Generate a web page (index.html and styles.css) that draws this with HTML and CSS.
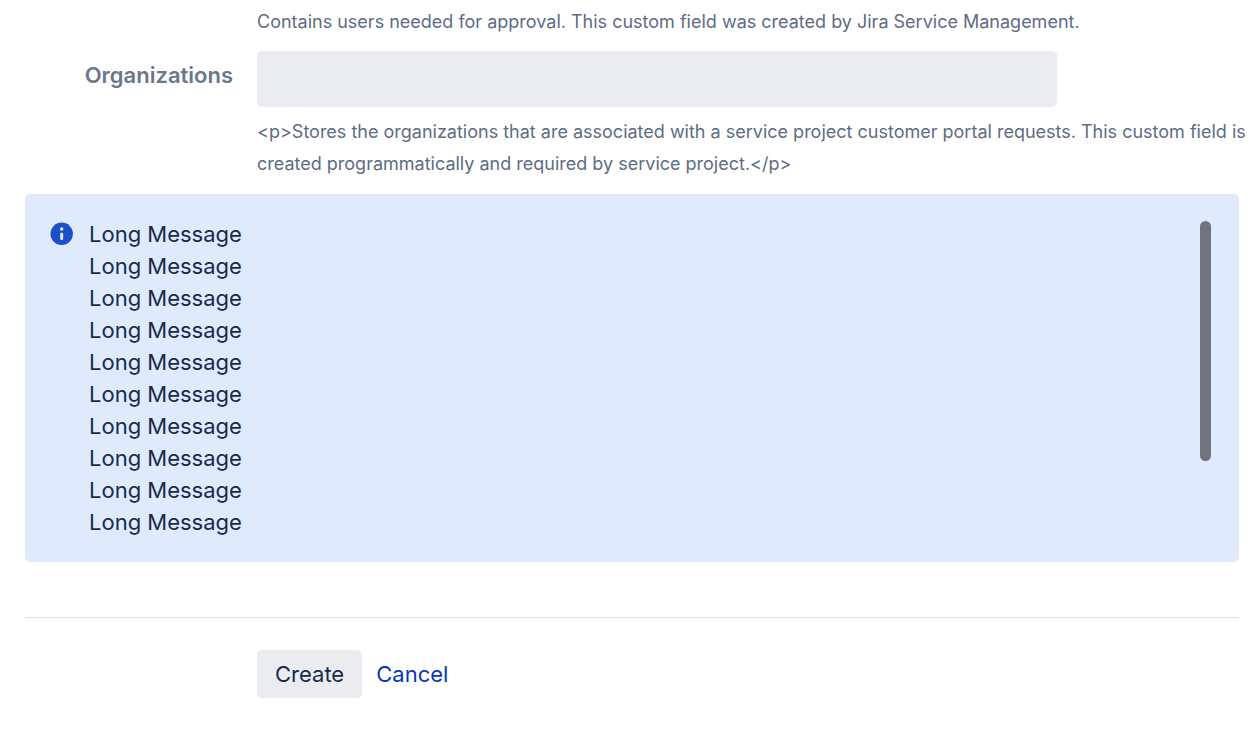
FILE: index.html
```html
<!DOCTYPE html>
<html lang="en">
<head>
<meta charset="utf-8">
<title>Create issue</title>
<link rel="stylesheet" href="styles.css">
</head>
<body>
<form class="form">
  <div class="field approvers">
    <p class="description">Contains users needed for approval. This custom field was created by Jira Service Management.</p>
  </div>
  <div class="field">
    <label class="label" for="organizations">Organizations</label>
    <input class="input" id="organizations" type="text">
    <p class="description">&lt;p&gt;Stores the organizations that are associated with a service project customer portal requests. This custom field is created programmatically and required by service project.&lt;/p&gt;</p>
  </div>
  <section class="message">
    <svg class="icon" viewBox="0 0 24 24" aria-hidden="true"><circle cx="11.7" cy="11.8" r="11.2" fill="#1d4fc9"/><circle cx="11.7" cy="7" r="1.7" fill="#dfeafd"/><path d="M11.7 12v4.6" stroke="#dfeafd" stroke-width="3" stroke-linecap="round"/></svg>
    <div class="lines">
      <p>Long Message</p>
      <p>Long Message</p>
      <p>Long Message</p>
      <p>Long Message</p>
      <p>Long Message</p>
      <p>Long Message</p>
      <p>Long Message</p>
      <p>Long Message</p>
      <p>Long Message</p>
      <p>Long Message</p>
    </div>
    <div class="scrollbar"><div class="thumb"></div></div>
  </section>
  <footer class="actions">
    <button class="create" type="button">Create</button>
    <a class="cancel" href="#">Cancel</a>
  </footer>
</form>
</body>
</html>
```
FILE: styles.css
```css
* { box-sizing: border-box; }
body { margin: 0; background: #fff; color: #172b4d; font: 22px/32px Inter, sans-serif; }
p { margin: 0; }
.form { padding: 6px 21px 0 25px; }
.field { display: grid; grid-template-columns: 208px minmax(0, 1fr); column-gap: 24px; margin-bottom: 14px; }
.approvers { margin-bottom: 13px; }
.label { padding-top: 8px; text-align: right; color: #6b778c; font-weight: 600; }
.input { width: 100%; max-width: 800px; height: 56px; border: 0; border-radius: 5px; padding: 0 12px; background: #ebecf0; font: inherit; }
.description { grid-column: 2; color: #5e6c84; font-size: 18px; margin-right: -20px; }
.field .input + .description { margin-top: 9px; }
.message { display: flex; padding: 24px 28px 24px 25px; border-radius: 5px; background: #dfeafd; }
.icon { flex: none; width: 24px; height: 24px; margin: 4px 15px 0 0; }
.lines { flex: 1; }
.scrollbar { width: 11px; padding-top: 3px; }
.thumb { width: 11px; height: 240px; border-radius: 6px; background: #6f747e; }
.actions { display: flex; align-items: center; gap: 14px; margin-top: 55px; padding: 32px 0 32px 232px; border-top: 1px solid #dcdee2; }
.create { height: 48px; padding: 0 18px; border: 0; border-radius: 5px; background: #ebecf0; color: #172b4d; font: inherit; }
.cancel { color: #0935b8; text-decoration: none; }
```
